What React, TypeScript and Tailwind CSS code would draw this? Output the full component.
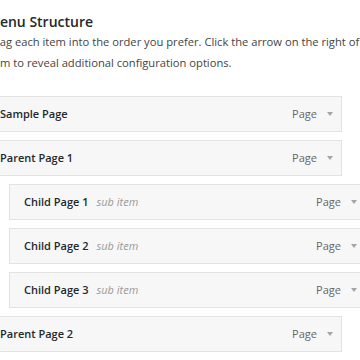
type MenuItem = {
  title: string;
  depth: 0 | 1;
};

const menuItems: MenuItem[] = [
  { title: "Sample Page", depth: 0 },
  { title: "Parent Page 1", depth: 0 },
  { title: "Child Page 1", depth: 1 },
  { title: "Child Page 2", depth: 1 },
  { title: "Child Page 3", depth: 1 },
  { title: "Parent Page 2", depth: 0 }
];

function ItemRow({ item }: { item: MenuItem }) {
  return (
    <li className={item.depth === 1 ? "ml-[24px]" : ""}>
      <div className="flex h-[36px] w-[357px] items-center justify-between border border-[#e2e2e2] bg-[#f7f7f7] pl-[14px] pr-[8px]">
        <div className="flex items-baseline gap-[8px]">
          <span className="text-[11px] font-semibold text-[#23282d]">{item.title}</span>
          {item.depth === 1 && <span className="text-[11px] italic text-[#999]">sub item</span>}
        </div>
        <div className="flex items-center gap-[10px]">
          <span className="text-[11px] text-[#666]">Page</span>
          <span className="h-0 w-0 border-x-[3.5px] border-t-[4px] border-x-transparent border-t-[#a0a5aa]" />
        </div>
      </div>
    </li>
  );
}

export default function App() {
  return (
    <div className="h-[360px] w-[360px] overflow-hidden bg-white font-['Open_Sans',sans-serif]">
      <div className="ml-[-15px] w-[430px] pt-[13px]">
        <h3 className="pl-[2px] text-[14px] font-semibold leading-[18px] text-[#23282d]">Menu Structure</h3>
        <p className="w-[412px] pl-[2px] text-[11.2px] leading-[21px] text-[#444]">
          Drag each item into the order you prefer. Click the arrow on the right of the item to reveal additional
          configuration options.
        </p>
        <ul className="mt-[23px] flex flex-col gap-[8px]">
          {menuItems.map((item) => (
            <ItemRow key={item.title} item={item} />
          ))}
        </ul>
      </div>
    </div>
  );
}
